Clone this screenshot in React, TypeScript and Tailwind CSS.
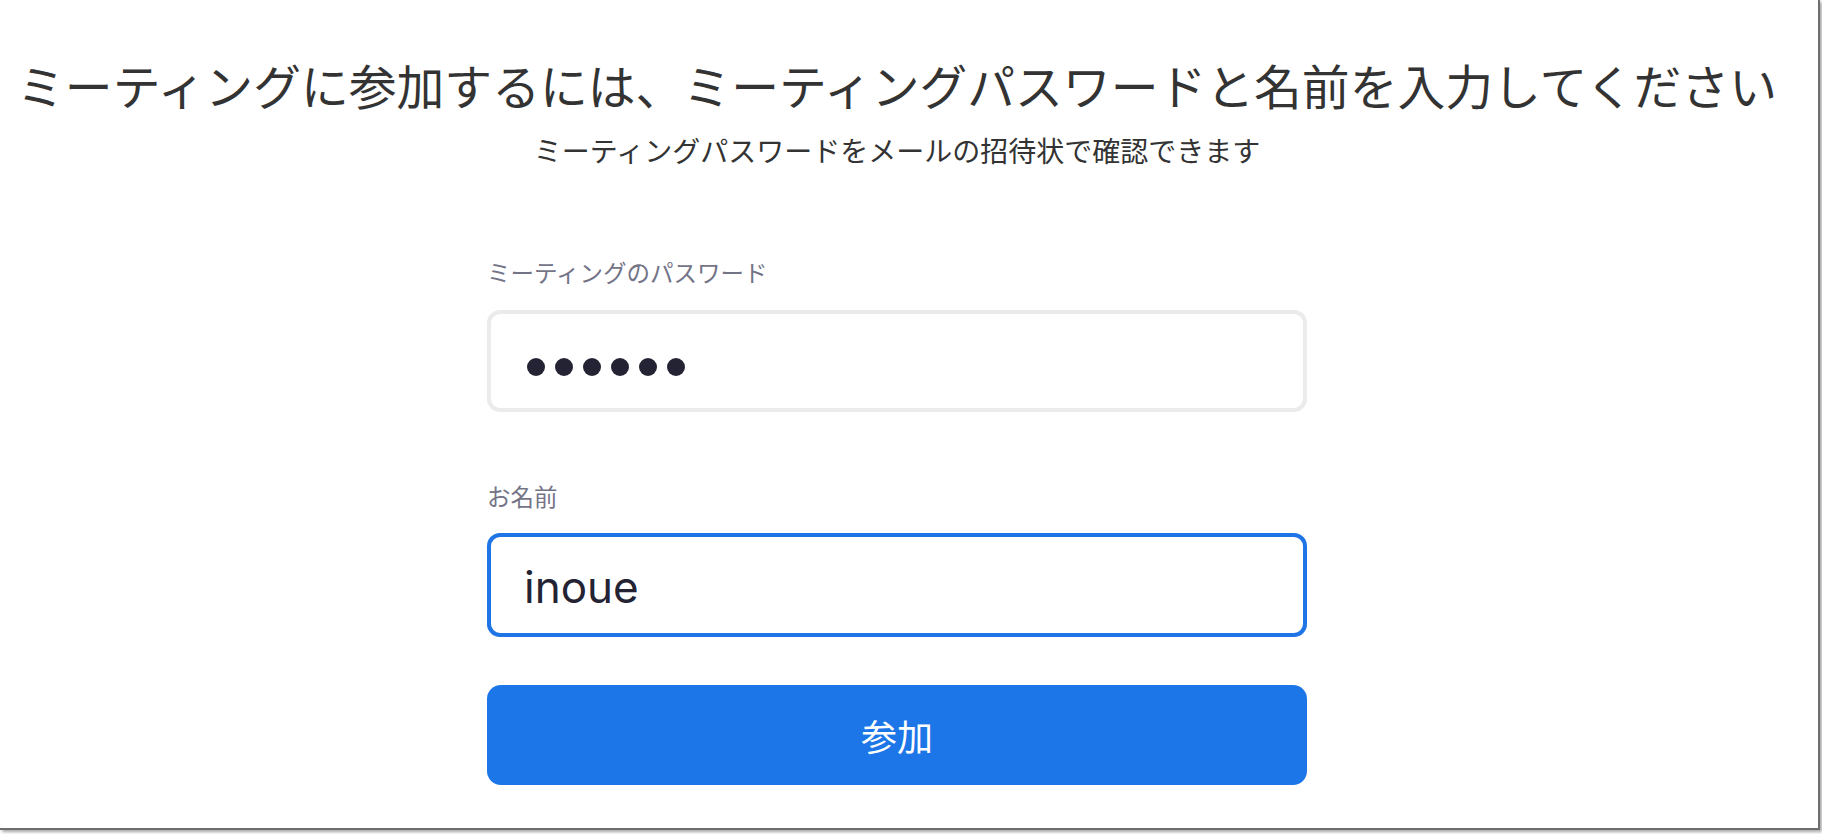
const jp = { fontFamily: '"Noto Sans CJK JP", "Noto Sans", sans-serif' };

const PasswordDots = ({ count }: { count: number }) => (
  <div className="flex items-center gap-[10px] mt-[12px]">
    {Array.from({ length: count }).map((_, i) => (
      <span key={i} className="block w-[18px] h-[18px] rounded-full bg-[#232333]" />
    ))}
  </div>
);

const App = () => {
  return (
    <div className="w-full h-[834px] bg-white overflow-hidden">
      <div className="w-[1820px] h-[830px] bg-white border-r-2 border-b-2 border-[#6e6e6e] shadow-[2px_2px_3px_rgba(0,0,0,0.35)]">
        <div className="flex flex-col items-center pr-[24px] pt-[57px]" style={jp}>
          <h1 className="text-[47.8px] leading-[56px] text-[#333333] font-normal whitespace-nowrap">
            ミーティングに参加するには、ミーティングパスワードと名前を入力してください
          </h1>
          <p className="mt-[19px] text-[28px] leading-[36px] text-[#333333] whitespace-nowrap">
            ミーティングパスワードをメールの招待状で確認できます
          </p>

          <form className="w-[820px] mt-[88px] flex flex-col">
            <label className="text-[23.5px] leading-[32px] text-[#747487]">ミーティングのパスワード</label>
            <div className="mt-[22px] h-[102px] rounded-[13px] border-[4px] border-[#ebebeb] flex items-center pl-[36px]">
              <PasswordDots count={6} />
            </div>

            <label className="mt-[68px] text-[23.5px] leading-[32px] text-[#747487]">お名前</label>
            <div className="mt-[21px] h-[104px] rounded-[13px] border-[4px] border-[#1f74e6] flex items-center pl-[33px]">
              <span
                className="text-[44px] leading-none text-[#232333] mt-[4px]"
                style={{ fontFamily: 'Inter, "Noto Sans", sans-serif' }}
              >
                inoue
              </span>
            </div>

            <button
              type="button"
              className="mt-[48px] h-[100px] rounded-[14px] bg-[#1c76e8] text-white text-[36px] leading-none flex items-center justify-center"
              style={jp}
            >
              参加
            </button>
          </form>
        </div>
      </div>
    </div>
  );
};

export default App;
